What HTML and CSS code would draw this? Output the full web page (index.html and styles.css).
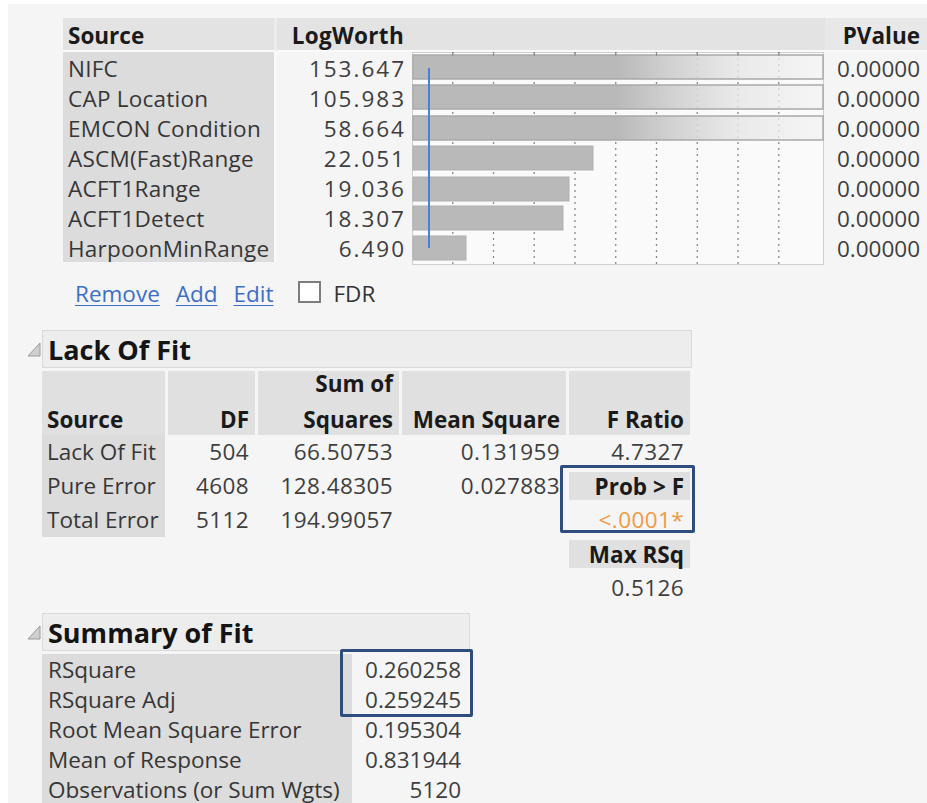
FILE: index.html
```html
<!DOCTYPE html>
<html lang="en">
<head>
<meta charset="utf-8">
<title>Effect Summary</title>
<link rel="stylesheet" href="styles.css">
</head>
<body>
<div class="page">

  <!-- Effect summary table with LogWorth bar chart -->
  <div class="effects">
    <div class="hd src">Source</div>
    <div class="hd num">LogWorth</div>
    <div class="hd chart-hd"></div>
    <div class="hd num pv">PValue</div>

    <div class="chart">
      <svg width="417" height="214" viewBox="0 0 417 214">
        <defs>
          <linearGradient id="fade" x1="0" x2="1" y1="0" y2="0">
            <stop offset="0" stop-color="#b9b9b9"/>
            <stop offset="0.5" stop-color="#b9b9b9"/>
            <stop offset="0.62" stop-color="#cdcdcd" stop-opacity="0.95"/>
            <stop offset="0.8" stop-color="#e6e6e6" stop-opacity="0.8"/>
            <stop offset="1" stop-color="#f3f3f3" stop-opacity="0.7"/>
          </linearGradient>
        </defs>
        <rect class="frame" x="4.5" y="0.5" width="411" height="212"/>
        <g class="grid">
          <line x1="44.75" y1="0" x2="44.75" y2="212"/>
          <line x1="85.5" y1="0" x2="85.5" y2="212"/>
          <line x1="126.25" y1="0" x2="126.25" y2="212"/>
          <line x1="167" y1="0" x2="167" y2="212"/>
          <line x1="207.75" y1="0" x2="207.75" y2="212"/>
          <line x1="248.5" y1="0" x2="248.5" y2="212"/>
          <line x1="289.25" y1="0" x2="289.25" y2="212"/>
          <line x1="330" y1="0" x2="330" y2="212"/>
          <line x1="370.75" y1="0" x2="370.75" y2="212"/>
        </g>
        <!-- bars past the axis end fade out -->
        <rect class="bar-over" x="5" y="3" width="410" height="24" fill="url(#fade)"/>
        <rect class="bar-over" x="5" y="33" width="410" height="24" fill="url(#fade)"/>
        <rect class="bar-over" x="5" y="64" width="410" height="24" fill="url(#fade)"/>
        <rect class="bar" x="5" y="94" width="180" height="24"/>
        <rect class="bar" x="5" y="125" width="156" height="24"/>
        <rect class="bar" x="5" y="154" width="150" height="24"/>
        <rect class="bar" x="5" y="184" width="53" height="24"/>
        <g class="ticks">
          <line x1="44.75" y1="0" x2="44.75" y2="4"/>
          <line x1="85.5" y1="0" x2="85.5" y2="4"/>
          <line x1="126.25" y1="0" x2="126.25" y2="4"/>
          <line x1="167" y1="0" x2="167" y2="4"/>
          <line x1="207.75" y1="0" x2="207.75" y2="4"/>
          <line x1="248.5" y1="0" x2="248.5" y2="4"/>
          <line x1="289.25" y1="0" x2="289.25" y2="4"/>
          <line x1="330" y1="0" x2="330" y2="4"/>
          <line x1="370.75" y1="0" x2="370.75" y2="4"/>
        </g>
        <line class="ref" x1="21" y1="16" x2="21" y2="196"/>
      </svg>
    </div>

    <div class="cell src">NIFC</div><div class="cell num lw">153.647</div><div class="cell num pv">0.00000</div>
    <div class="cell src">CAP Location</div><div class="cell num lw">105.983</div><div class="cell num pv">0.00000</div>
    <div class="cell src">EMCON Condition</div><div class="cell num lw">58.664</div><div class="cell num pv">0.00000</div>
    <div class="cell src">ASCM(Fast)Range</div><div class="cell num lw">22.051</div><div class="cell num pv">0.00000</div>
    <div class="cell src">ACFT1Range</div><div class="cell num lw">19.036</div><div class="cell num pv">0.00000</div>
    <div class="cell src">ACFT1Detect</div><div class="cell num lw">18.307</div><div class="cell num pv">0.00000</div>
    <div class="cell src">HarpoonMinRange</div><div class="cell num lw">6.490</div><div class="cell num pv">0.00000</div>
  </div>

  <div class="links">
    <a href="#" class="link">Remove</a>
    <a href="#" class="link">Add</a>
    <a href="#" class="link">Edit</a>
    <label class="check"><span class="box"></span>FDR</label>
  </div>

  <!-- Lack Of Fit report -->
  <section class="outline lof">
    <div class="outline-head">
      <svg class="disclosure" width="14" height="16" viewBox="0 0 14 16"><polygon points="13,2 13,15 1,15"/></svg>
      <div class="title-bar lof-bar">Lack Of Fit</div>
    </div>
    <div class="lof-table">
      <div class="th"><span>Source</span></div>
      <div class="th num"><span>DF</span></div>
      <div class="th num"><span>Sum of<br>Squares</span></div>
      <div class="th num"><span>Mean Square</span></div>
      <div class="th num"><span>F Ratio</span></div>

      <div class="td src">Lack Of Fit</div><div class="td num">504</div><div class="td num">66.50753</div><div class="td num">0.131959</div><div class="td num">4.7327</div>
      <div class="td src">Pure Error</div><div class="td num">4608</div><div class="td num">128.48305</div><div class="td num">0.027883</div>
      <div class="td src">Total Error</div><div class="td num">5112</div><div class="td num">194.99057</div><div class="td num"></div>

      <div class="td num sub r3"><span class="subhd">Prob &gt; F</span></div>
      <div class="td num prob r4">&lt;.0001*</div>
      <div class="td num sub r5"><span class="subhd">Max RSq</span></div>
      <div class="td num r6">0.5126</div>
      <div class="callout lof-callout"></div>
    </div>
  </section>

  <!-- Summary of Fit report -->
  <section class="outline sof">
    <div class="outline-head">
      <svg class="disclosure" width="14" height="16" viewBox="0 0 14 16"><polygon points="13,2 13,15 1,15"/></svg>
      <div class="title-bar sof-bar">Summary of Fit</div>
    </div>
    <div class="sof-table">
      <div class="sd src">RSquare</div><div class="sd num v1">0.260258</div>
      <div class="sd src">RSquare Adj</div><div class="sd num v2">0.259245</div>
      <div class="sd src">Root Mean Square Error</div><div class="sd num">0.195304</div>
      <div class="sd src">Mean of Response</div><div class="sd num">0.831944</div>
      <div class="sd src">Observations (or Sum Wgts)</div><div class="sd num">5120</div>
      <div class="callout sof-callout"></div>
    </div>
  </section>

</div>
</body>
</html>
```

FILE: styles.css
```css
* {
  box-sizing: border-box;
}

html,
body {
  margin: 0;
}

body {
  background: #ffffff;
  font-family: "Open Sans", "Noto Sans", "DejaVu Sans", sans-serif;
  font-size: 22.5px;
  color: #363636;
}

.page {
  margin: 4px 0 0 8px;
  padding-top: 14px;
  height: 799px;
  background: #f5f5f5;
  overflow: hidden;
}

/* ---------- effect summary ---------- */

.effects {
  margin-left: 55px;
  display: grid;
  grid-template-columns: 214px 131px 417px 102px;
  grid-template-rows: 34px repeat(7, 30px);
}

.hd {
  display: flex;
  align-items: center;
  padding: 2px 5px 0;
  background: #e3e3e3;
  border-bottom: 2px solid #fafafa;
  font-weight: 700;
  color: #1a1a1a;
  white-space: nowrap;
}

.hd.src {
  border-right: 3px solid #ececec;
}

.hd.num {
  justify-content: flex-end;
  padding-right: 4px;
  letter-spacing: 0.3px;
}

.hd.pv {
  padding-right: 7px;
  letter-spacing: 0;
  background: #e8e8e8;
}

.cell {
  display: flex;
  align-items: center;
  padding: 3px 5px 0;
  white-space: nowrap;
  letter-spacing: 0.25px;
}

.cell.src {
  background: #dcdcdc;
  border-right: 3px solid #f9f9f9;
}

.cell.num {
  justify-content: flex-end;
  padding-right: 4px;
  color: #3e3e3e;
}

.cell.lw {
  letter-spacing: 2px;
  padding-right: 2px;
}

.cell.pv {
  padding-right: 7px;
  letter-spacing: 0;
}

.chart {
  grid-column: 3;
  grid-row: 2 / span 7;
  overflow: visible;
}

.chart svg {
  display: block;
}

.frame {
  fill: #fafafa;
  stroke: #cfcfcf;
  stroke-width: 1;
}

.grid line {
  stroke: #8a8a8a;
  stroke-width: 1.3;
  stroke-dasharray: 2 4;
}

.ticks line {
  stroke: #8a8a8a;
  stroke-width: 1;
}

.bar {
  fill: #b9b9b9;
  stroke: #b0b0b0;
  stroke-width: 1;
}

.bar-over {
  stroke: #a9a9a9;
  stroke-width: 1.5;
}

.ref {
  stroke: #4d7fd6;
  stroke-width: 2;
}

/* ---------- link row ---------- */

.links {
  margin: 16px 0 0 67px;
  height: 30px;
  display: flex;
  align-items: center;
  gap: 16px;
}

.link {
  color: #3b6fc6;
  text-decoration: underline;
  text-underline-offset: 3px;
  text-decoration-thickness: 1px;
}

.check {
  margin-left: 8px;
  display: flex;
  align-items: center;
  gap: 13px;
  color: #333333;
}

.box {
  width: 23px;
  height: 22px;
  margin-top: -3px;
  background: #ffffff;
  border: 2px solid #7d7d7d;
}

/* ---------- outline reports ---------- */

.outline {
  margin-left: 19px;
}

.lof {
  margin-top: 22px;
}

.sof {
  margin-top: 8px;
}

.outline-head {
  display: flex;
  align-items: center;
}

.disclosure {
  margin-right: 1px;
}

.disclosure polygon {
  fill: #cfcfcf;
  stroke: #9a9a9a;
  stroke-width: 1;
}

.title-bar {
  height: 38px;
  padding-left: 5px;
  display: flex;
  align-items: center;
  background: #ededed;
  border: 1px solid #d9d9d9;
  font-size: 27px;
  font-weight: 700;
  color: #141414;
}

.lof-bar {
  width: 650px;
}

.sof-bar {
  width: 428px;
}

/* lack of fit grid */

.lof-table {
  margin: 3px 0 0 15px;
  display: grid;
  grid-template-columns: 123px 87px 141px 164px 121px;
  grid-template-rows: 64px repeat(5, 34px);
  column-gap: 3px;
}

.th {
  display: flex;
  align-items: flex-end;
  padding: 0 5px;
  background: #e0e0e0;
  font-weight: 700;
  color: #1a1a1a;
  line-height: 36px;
  white-space: nowrap;
}

.th span {
  margin-bottom: -3px;
}

.th.num {
  justify-content: flex-end;
  text-align: right;
  padding-right: 6px;
}

.td {
  display: flex;
  align-items: center;
  padding: 0 5px 2px;
  white-space: nowrap;
}

.td.src {
  background: #dcdcdc;
}

.td.num {
  justify-content: flex-end;
  padding-right: 6px;
  color: #3e3e3e;
  letter-spacing: 0.4px;
}

.td.sub {
  padding: 3px 0;
  align-items: stretch;
  letter-spacing: 0;
}

.subhd {
  flex: 1;
  display: flex;
  align-items: center;
  justify-content: flex-end;
  padding-right: 6px;
  background: #e0e0e0;
  font-weight: 700;
  color: #1a1a1a;
}

.td.prob {
  color: #ef9a45;
}

.r3 {
  grid-column: 5;
  grid-row: 3;
}

.r4 {
  grid-column: 5;
  grid-row: 4;
}

.r5 {
  grid-column: 5;
  grid-row: 5;
}

.r6 {
  grid-column: 5;
  grid-row: 6;
}

.callout {
  border: 3px solid #2f4d7c;
  border-radius: 2px;
  pointer-events: none;
}

.lof-callout {
  grid-column: 5;
  grid-row: 3 / span 2;
  margin: -4px -5px 4px -9px;
}

/* summary of fit grid */

.sof-table {
  margin: 3px 0 0 15px;
  display: grid;
  grid-template-columns: 310px 118px;
  grid-template-rows: repeat(5, 30px);
}

.sd {
  display: flex;
  align-items: center;
  padding: 0 6px;
  white-space: nowrap;
}

.sd.src {
  background: #dcdcdc;
}

.sd.num {
  justify-content: flex-end;
  padding-right: 9px;
  color: #3e3e3e;
}

.v1 {
  grid-column: 2;
  grid-row: 1;
}

.v2 {
  grid-column: 2;
  grid-row: 2;
}

.sof-callout {
  grid-column: 2;
  grid-row: 1 / span 2;
  margin: -5px -3px -3px -12px;
}
```
